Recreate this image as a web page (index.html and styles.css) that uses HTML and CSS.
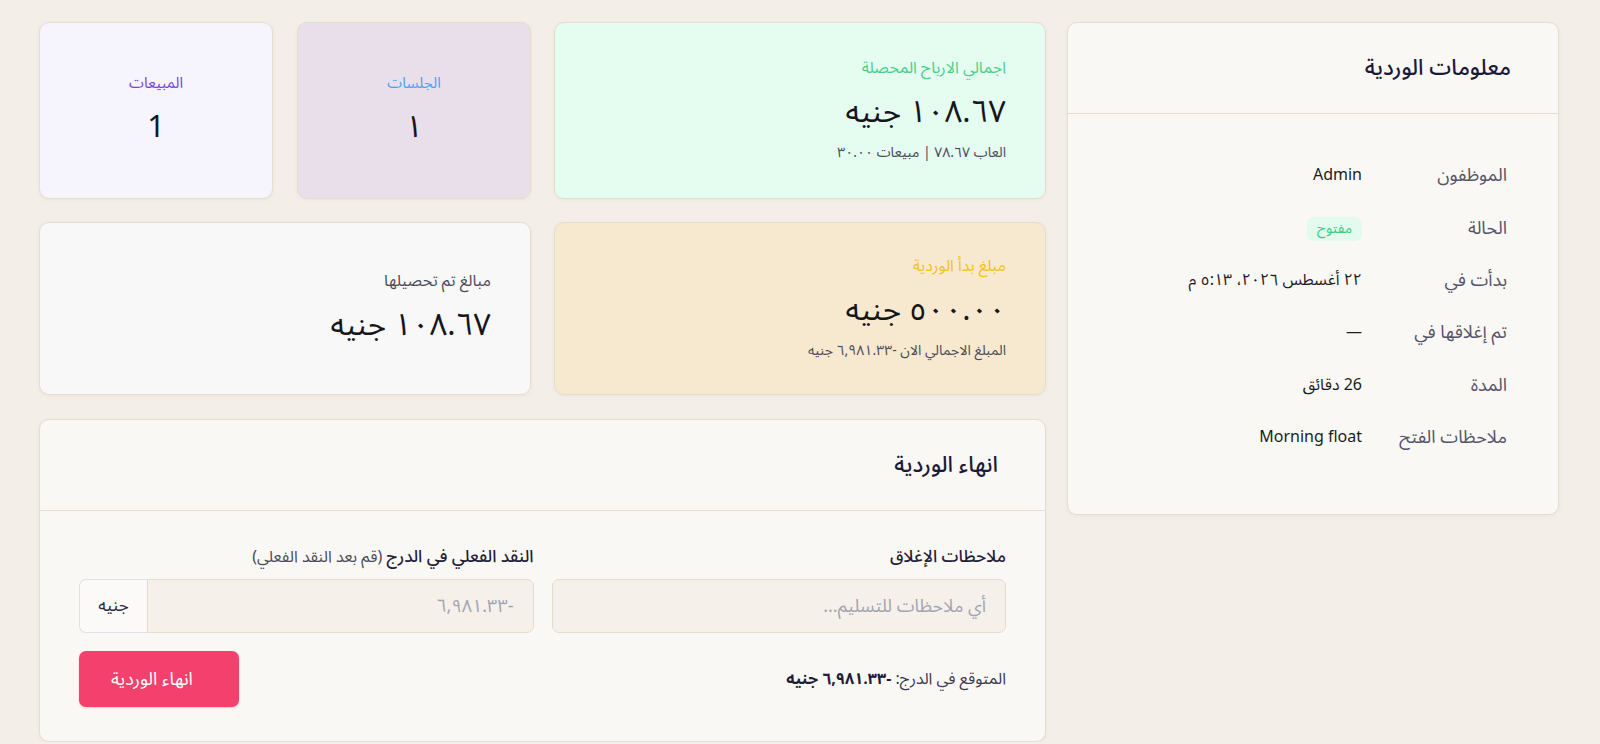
FILE: index.html
```html
<!DOCTYPE html>
<html lang="ar" dir="rtl">
<head>
<meta charset="utf-8">
<title>الوردية</title>
<link rel="stylesheet" href="styles.css">
</head>
<body>
<main class="page">
  <aside class="panel info">
    <header class="panel-head"><h2>معلومات الوردية</h2></header>
    <dl class="info-list">
      <div class="info-row"><dt>الموظفون</dt><dd>Admin</dd></div>
      <div class="info-row"><dt>الحالة</dt><dd><span class="badge">مفتوح</span></dd></div>
      <div class="info-row"><dt>بدأت في</dt><dd>٢٢ أغسطس ٢٠٢٦، ٥:١٣ م</dd></div>
      <div class="info-row"><dt>تم إغلاقها في</dt><dd>—</dd></div>
      <div class="info-row"><dt>المدة</dt><dd>26 دقائق</dd></div>
      <div class="info-row"><dt>ملاحظات الفتح</dt><dd>Morning float</dd></div>
    </dl>
  </aside>

  <section class="main-col">
    <div class="stats-row row-top">
      <div class="stat stat-wide stat-green">
        <div class="stat-label">اجمالي الارباح المحصلة</div>
        <div class="stat-value">١٠٨.٦٧ جنيه</div>
        <div class="stat-sub">العاب ٧٨.٦٧ | مبيعات ٣٠.٠٠</div>
      </div>
      <div class="stat-pair">
        <div class="stat stat-small stat-mauve">
          <div class="stat-label">الجلسات</div>
          <div class="stat-value">١</div>
        </div>
        <div class="stat stat-small stat-lilac">
          <div class="stat-label">المبيعات</div>
          <div class="stat-value">1</div>
        </div>
      </div>
    </div>

    <div class="stats-row row-mid">
      <div class="stat stat-wide stat-sand">
        <div class="stat-label">مبلغ بدأ الوردية</div>
        <div class="stat-value">٥٠٠.٠٠ جنيه</div>
        <div class="stat-sub">المبلغ الاجمالي الان -٦,٩٨١.٣٣ جنيه</div>
      </div>
      <div class="stat stat-wide stat-gray">
        <div class="stat-label">مبالغ تم تحصيلها</div>
        <div class="stat-value">١٠٨.٦٧ جنيه</div>
      </div>
    </div>

    <section class="panel end-shift">
      <header class="panel-head"><h2>انهاء الوردية</h2></header>
      <form class="end-body">
        <div class="fields">
          <label class="field">
            <span class="field-label">ملاحظات الإغلاق</span>
            <input class="input" type="text" placeholder="أي ملاحظات للتسليم...">
          </label>
          <label class="field">
            <span class="field-label">النقد الفعلي في الدرج <span class="hint">(قم بعد النقد الفعلي)</span></span>
            <span class="input-group">
              <input class="input input-cash" type="text" placeholder="-٦,٩٨١.٣٣">
              <span class="addon">جنيه</span>
            </span>
          </label>
        </div>
        <div class="actions">
          <p class="expected">المتوقع في الدرج: <strong>-٦,٩٨١.٣٣ جنيه</strong></p>
          <button class="btn-end" type="button">انهاء الوردية</button>
        </div>
      </form>
    </section>
  </section>
</main>
</body>
</html>
```

FILE: styles.css
```css
* { box-sizing: border-box; }

html, body {
  margin: 0;
  background: #f3efe8;
  font-family: "Noto Sans Arabic", "Noto Sans", "DejaVu Sans", sans-serif;
  color: #1c1c22;
}

.page {
  display: grid;
  grid-template-columns: 492px 1fr;
  gap: 21px;
  align-items: start;
  padding: 22px 41px 0 39px;
}

.panel {
  background: #faf8f4;
  border: 1px solid #e6ddcf;
  border-radius: 10px;
  box-shadow: 0 1px 4px rgba(90, 70, 40, 0.06);
}

.panel-head {
  height: 91px;
  display: flex;
  align-items: center;
  padding: 0 47px;
  border-bottom: 1px solid #e4dccf;
}

.panel-head h2 {
  margin: 0;
  font-size: 22px;
  font-weight: 500;
  color: #1b1a3a;
}

/* shift info list */
.info-list {
  margin: 0;
  padding: 35px 51px 51px;
}

.info-row {
  display: grid;
  grid-template-columns: 145px 1fr;
  align-items: center;
  height: 52.4px;
}

.info-row dt {
  font-size: 18px;
  color: #55536a;
}

.info-row dd {
  margin: 0;
  font-size: 16px;
  color: #1c1c22;
}

.badge {
  display: inline-block;
  padding: 2px 10px;
  border-radius: 7px;
  background: #e3faee;
  color: #3fcb82;
  font-size: 14px;
  line-height: 20px;
}

/* main column */
.main-col {
  display: flex;
  flex-direction: column;
  gap: 23px;
}

.stats-row {
  display: grid;
  grid-template-columns: 1fr 1fr;
  gap: 23px;
}

.row-top { height: 177px; }
.row-mid { height: 173px; margin-bottom: 1px; }

.stat-pair {
  display: grid;
  grid-template-columns: 1fr 1fr;
  gap: 24px;
}

.stat {
  border: 1px solid #e6ddcf;
  border-radius: 10px;
  box-shadow: 0 1px 4px rgba(90, 70, 40, 0.06);
  display: flex;
  flex-direction: column;
  justify-content: center;
}

.stat-wide {
  padding: 0 39px;
  align-items: flex-start;
}

.stat-small {
  align-items: center;
}

.stat-label { font-size: 16px; line-height: 22px; }
.stat-small .stat-label { font-size: 15px; }

.stat-value {
  font-size: 31px;
  line-height: 44px;
  margin-top: 11px;
  color: #16161a;
}

.stat-sub {
  font-size: 14px;
  line-height: 22px;
  margin-top: 8px;
  color: #4b4a58;
}

.stat-green { background: #e5fcf0; }
.stat-green .stat-label { color: #4ccf8a; }

.stat-mauve { background: #e8dfea; }
.stat-mauve .stat-label { color: #4c9ff4; }

.stat-lilac { background: #f6f4fd; }
.stat-lilac .stat-label { color: #7b3fe4; }

.stat-sand { background: #f6e9cf; }
.stat-sand .stat-label { color: #f2c21b; }

.stat-gray { background: #f8f8f8; }
.stat-gray .stat-label { color: #4b4a58; }

/* end shift form */
.end-body {
  padding: 34px 39px 34px;
}

.fields {
  display: grid;
  grid-template-columns: 1fr 1fr;
  gap: 18px;
}

.field {
  display: flex;
  flex-direction: column;
  gap: 10px;
}

.field-label {
  font-size: 17px;
  font-weight: 500;
  color: #1f1e36;
  line-height: 24px;
}

.hint {
  font-size: 16px;
  font-weight: 400;
  color: #4b4a58;
}

.input {
  height: 54px;
  width: 100%;
  border: 1px solid #e4dccd;
  border-radius: 7px;
  background: #f5f1ea;
  padding: 0 19px;
  font: inherit;
  font-size: 18px;
  color: #1c1c22;
  outline: none;
}

.input::placeholder { color: #a3a4b3; }

.input-group {
  display: flex;
  height: 54px;
}

.input-cash {
  border-radius: 0 7px 7px 0;
}

.addon {
  width: 68px;
  flex: none;
  display: flex;
  align-items: center;
  justify-content: center;
  background: #fbfaf8;
  border: 1px solid #dfe1e8;
  border-right: none;
  border-radius: 7px 0 0 7px;
  font-size: 17px;
  color: #2a2940;
}

.actions {
  margin-top: 18px;
  display: flex;
  align-items: center;
  justify-content: space-between;
}

.expected {
  margin: 0;
  font-size: 16px;
  color: #3b3a4e;
}

.expected strong { color: #1f1e36; font-weight: 700; }

.btn-end {
  width: 160px;
  height: 56px;
  border: none;
  border-radius: 7px;
  background: #f3406d;
  color: #fff;
  font: inherit;
  font-size: 18px;
  padding: 0 22px 0 8px;
  box-shadow: 0 1px 2px rgba(200, 30, 70, 0.2);
}
```
